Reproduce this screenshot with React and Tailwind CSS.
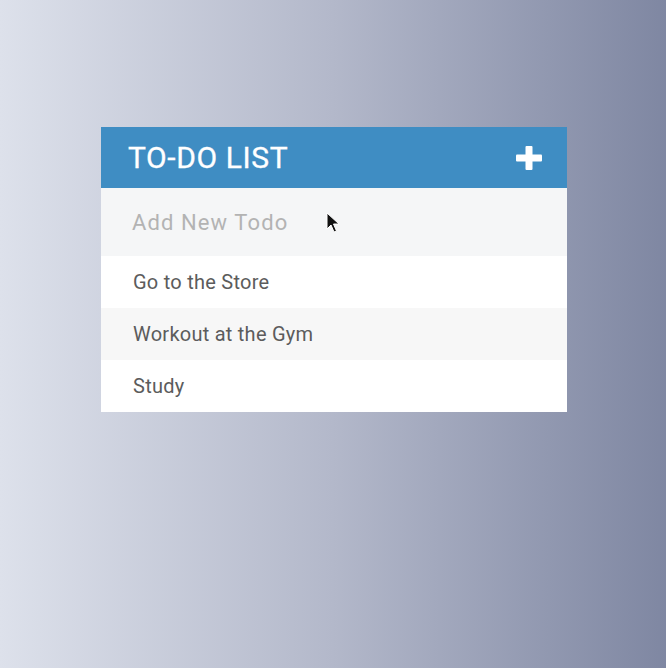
export default function App() {
  const items = [
    { text: "Go to the Store", bg: "bg-white" },
    { text: "Workout at the Gym", bg: "bg-[#f7f7f7]" },
    { text: "Study", bg: "bg-white" },
  ];
  return (
    <div
      className="relative w-[666px] h-[668px] bg-gradient-to-r from-[#dde1eb] via-[#b3b8ca] to-[#7f87a2] pt-[127px] pl-[101px]"
      style={{ fontFamily: "Roboto, 'Liberation Sans', sans-serif" }}
    >
      <div className="w-[466px] flex flex-col">
        <div className="h-[61px] bg-[#3f8dc3] flex items-center justify-between pl-[27px] pr-[25px]">
          <span className="text-white text-[30px] leading-none tracking-[0.6px] [-webkit-text-stroke:0.3px_white]">TO-DO LIST</span>
          <svg width="26" height="24" viewBox="0 0 26 24">
            <rect x="0" y="8.5" width="26" height="7" rx="1" fill="#fff" />
            <rect x="9.5" y="0" width="7" height="24" rx="1" fill="#fff" />
          </svg>
        </div>
        <div className="h-[68px] bg-[#f5f6f7] flex items-center pl-[31px]">
          <span className="text-[22px] text-[#b3b3b3] tracking-[1.1px]">Add New Todo</span>
        </div>
        {items.map((it) => (
          <div key={it.text} className={`h-[52px] ${it.bg} flex items-center pl-[32px]`}>
            <span className="text-[20px] text-[#5c5c5c] tracking-[0.25px]">{it.text}</span>
          </div>
        ))}
      </div>
      <svg className="absolute left-[326px] top-[212px]" width="14" height="22" viewBox="0 0 14 22">
        <path d="M1 1 L1 17 L5 13 L8 20 L10.5 19 L7.5 12 L13 12 Z" fill="#111" stroke="#fff" strokeWidth="1" strokeLinejoin="round" />
      </svg>
    </div>
  );
}
